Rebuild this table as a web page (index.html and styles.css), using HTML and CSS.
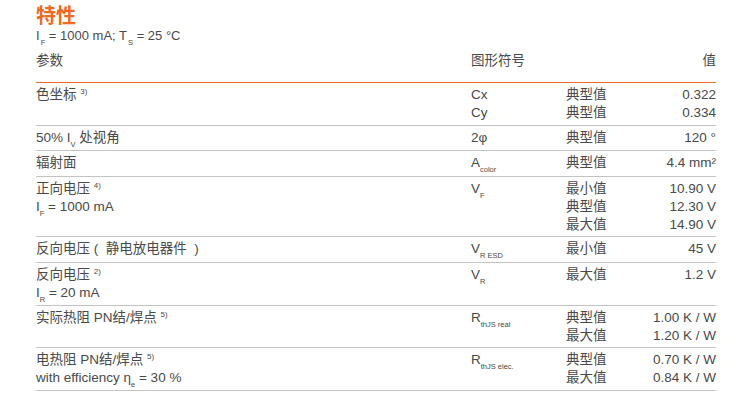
FILE: index.html
```html
<!DOCTYPE html>
<html lang="zh">
<head>
<meta charset="utf-8">
<link rel="stylesheet" href="styles.css">
</head>
<body>
<div class="page">
  <h1 class="title">特性</h1>
  <p class="cond">I<sub>F</sub> = 1000 mA; T<sub>S</sub> = 25 °C</p>
  <table class="spec">
    <colgroup>
      <col class="c-param"><col class="c-sym"><col class="c-kind"><col class="c-val">
    </colgroup>
    <thead>
      <tr><th>参数</th><th>图形符号</th><th></th><th class="num">值</th></tr>
    </thead>
    <tbody>
      <tr>
        <td>色坐标 <sup>3)</sup></td>
        <td>Cx<br>Cy</td>
        <td>典型值<br>典型值</td>
        <td class="num">0.322<br>0.334</td>
      </tr>
      <tr>
        <td>50% I<sub>V</sub> 处视角</td>
        <td>2φ</td>
        <td>典型值</td>
        <td class="num">120 °</td>
      </tr>
      <tr>
        <td>辐射面</td>
        <td>A<sub>color</sub></td>
        <td>典型值</td>
        <td class="num">4.4 mm²</td>
      </tr>
      <tr>
        <td>正向电压 <sup>4)</sup><br>I<sub>F</sub> = 1000 mA</td>
        <td>V<sub>F</sub></td>
        <td>最小值<br>典型值<br>最大值</td>
        <td class="num">10.90 V<br>12.30 V<br>14.90 V</td>
      </tr>
      <tr>
        <td>反向电压 (&nbsp; 静电放电器件&nbsp; )</td>
        <td>V<sub>R ESD</sub></td>
        <td>最小值</td>
        <td class="num">45 V</td>
      </tr>
      <tr>
        <td>反向电压 <sup>2)</sup><br>I<sub>R</sub> = 20 mA</td>
        <td>V<sub>R</sub></td>
        <td>最大值</td>
        <td class="num">1.2 V</td>
      </tr>
      <tr>
        <td>实际热阻 PN结/焊点 <sup>5)</sup></td>
        <td>R<sub>thJS real</sub></td>
        <td>典型值<br>最大值</td>
        <td class="num">1.00 K / W<br>1.20 K / W</td>
      </tr>
      <tr>
        <td>电热阻 PN结/焊点 <sup>5)</sup><br>with efficiency η<sub>e</sub> = 30 %</td>
        <td>R<sub>thJS elec.</sub></td>
        <td>典型值<br>最大值</td>
        <td class="num">0.70 K / W<br>0.84 K / W</td>
      </tr>
    </tbody>
  </table>
</div>
</body>
</html>
```

FILE: styles.css
```css
html, body {
  margin: 0;
  padding: 0;
  background: #ffffff;
}

.page {
  padding: 0 29px 0 36px;
  width: 680px;
  font-family: "Liberation Sans", Arial, "Noto Sans CJK SC", sans-serif;
  font-size: 13.5px;
  color: #4a4a4a;
}

.title {
  margin: 0;
  font-size: 20px;
  line-height: 29px;
  font-weight: bold;
  color: #f06a21;
  font-family: "Noto Sans CJK SC", sans-serif;
}

.cond {
  margin: 0;
  font-size: 13px;
  line-height: 14px;
}

.cond sub {
  margin-left: 1px;
}

sub {
  font-size: 7.5px;
  line-height: 0;
  vertical-align: -5px;
}

sup {
  font-size: 8px;
  line-height: 0;
  vertical-align: 5px;
}

.spec {
  width: 680px;
  border-collapse: collapse;
  table-layout: fixed;
}

.c-param { width: 435px; }
.c-sym { width: 95px; }
.c-kind { width: 80px; }
.c-val { width: 70px; }

.spec th {
  font-weight: normal;
  text-align: left;
  padding: 9px 0 12px 0;
  line-height: 18px;
  vertical-align: top;
  border-bottom: 1.5px solid #f06a21;
}

.spec td {
  height: 19.5px;
  padding: 3px 0 2px 0;
  line-height: 18.3px;
  vertical-align: top;
  border-bottom: 1.5px solid #c4c4c4;
  white-space: nowrap;
}

.spec .num {
  text-align: right;
}
```
